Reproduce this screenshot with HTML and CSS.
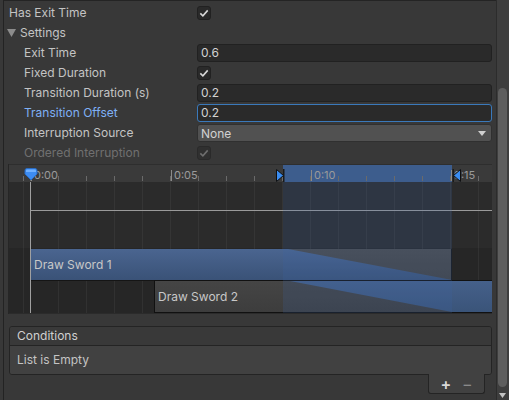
FILE: index.html
```html
<!DOCTYPE html>
<html>
<head>
<meta charset="utf-8">
<link rel="stylesheet" href="styles.css">
</head>
<body>
<div class="window">
  <div class="main">
    <div class="rows">
      <div class="row">
        <span class="label">Has Exit Time</span>
        <span class="check"><svg viewBox="0 0 14 14" width="14" height="14"><path d="M3.3 7.3 L5.9 9.8 L10.7 4.4" fill="none" stroke="#d8d8d8" stroke-width="1.6"/></svg></span>
      </div>
      <div class="row">
        <span class="label foldout"><svg class="fold" viewBox="0 0 9 8" width="9" height="8"><path d="M0 0 H9 L4.5 8 Z" fill="#8c8c8c"/></svg>Settings</span>
      </div>
      <div class="row">
        <span class="label sub">Exit Time</span>
        <span class="field">0.6</span>
      </div>
      <div class="row">
        <span class="label sub">Fixed Duration</span>
        <span class="check"><svg viewBox="0 0 14 14" width="14" height="14"><path d="M3.3 7.3 L5.9 9.8 L10.7 4.4" fill="none" stroke="#d8d8d8" stroke-width="1.6"/></svg></span>
      </div>
      <div class="row">
        <span class="label sub">Transition Duration (s)</span>
        <span class="field">0.2</span>
      </div>
      <div class="row">
        <span class="label sub focus">Transition Offset</span>
        <span class="field focused">0.2</span>
      </div>
      <div class="row">
        <span class="label sub">Interruption Source</span>
        <span class="dropdown">None<svg class="caret" viewBox="0 0 8 5" width="8" height="5"><path d="M0 0 H8 L4 5 Z" fill="#d0d0d0"/></svg></span>
      </div>
      <div class="row">
        <span class="label sub disabled">Ordered Interruption</span>
        <span class="check dim"><svg viewBox="0 0 14 14" width="14" height="14"><path d="M3.3 7.3 L5.9 9.8 L10.7 4.4" fill="none" stroke="#6e6e6e" stroke-width="1.6"/></svg></span>
      </div>
    </div>

    <div class="timeline">
      <div class="ruler">
        <div class="sel-ruler"></div>
        <div class="ticks"></div>
        <span class="mark" style="left:22px">0:00</span>
        <span class="mark" style="left:162px">0:05</span>
        <span class="mark" style="left:302px">0:10</span>
        <span class="mark" style="left:442px">0:15</span>
        <svg class="range-start" viewBox="0 0 9 13" width="9" height="13"><path d="M0.5 0.5 L7.5 6.5 L0.5 12.5 Z" fill="#3a8cf0" stroke="#101010" stroke-width="1"/><rect x="7" y="0" width="1.5" height="13" fill="#1a1a1a"/></svg>
        <svg class="range-end" viewBox="0 0 9 13" width="9" height="13"><path d="M8.5 0.5 L1.5 6.5 L8.5 12.5 Z" fill="#3a8cf0" stroke="#101010" stroke-width="1"/><rect x="0.5" y="0" width="1.5" height="13" fill="#1a1a1a"/></svg>
        <svg class="playhead" viewBox="0 0 14 13" width="14" height="13"><path d="M1 2.5 Q1 0.5 3 0.5 H11 Q13 0.5 13 2.5 V6 L7 12 L1 6 Z" fill="#3d8cf2" stroke="#2a6cc4" stroke-width="1"/><path d="M2 2.5 Q2 1.5 3 1.5 H11 Q12 1.5 12 2.5 V4 H2 Z" fill="#6fb0ff"/></svg>
      </div>
      <div class="tl-body">
        <div class="curve"><div class="hline"></div></div>
        <div class="tracks">
          <div class="bar bar1">
            <div class="fade1"></div>
            <span class="bar-label">Draw Sword 1</span>
          </div>
          <div class="bar bar2">
            <div class="fade2"></div>
            <span class="bar-label">Draw Sword 2</span>
          </div>
        </div>
        <div class="sel-body"></div>
        <div class="playline"></div>
      </div>
    </div>

    <div class="conditions">
      <div class="cond-head">Conditions</div>
      <div class="cond-body">List is Empty</div>
    </div>
    <div class="cond-foot">
      <span class="plus">+</span>
      <span class="minus">−</span>
    </div>
  </div>
  <div class="scrollbar">
    <div class="thumb"></div>
    <svg class="down" viewBox="0 0 7 5" width="7" height="5"><path d="M0 0 H7 L3.5 5 Z" fill="#c4c4c4"/></svg>
  </div>
</div>
</body>
</html>
```

FILE: styles.css
```css
* { box-sizing: border-box; }
html, body {
  margin: 0;
  padding: 0;
  width: 509px;
  height: 400px;
  overflow: hidden;
  background: #383838;
  font-family: Inter, "Noto Sans", sans-serif;
  font-size: 12px;
  color: #c4c4c4;
}
.window {
  display: flex;
  height: 400px;
}
.main {
  flex: 1;
  margin-left: 3px;
  border-left: 1px solid #232323;
  border-top: 1px solid #242424;
  padding-top: 2px;
}
.rows { display: flex; flex-direction: column; }
.row {
  height: 20px;
  display: grid;
  grid-template-columns: 193px 1fr;
  align-items: center;
  padding-right: 4px;
}
.label { padding-left: 5px; white-space: nowrap; line-height: 20px; }
.label.foldout { padding-left: 3px; display: flex; align-items: center; }
.fold { margin-right: 4px; }
.label.sub { padding-left: 20px; }
.label.focus { color: #7fb0f5; }
.label.disabled { color: #707070; }
.check {
  width: 14px;
  height: 14px;
  background: #2a2a2a;
  border: 1px solid #212121;
  border-radius: 3px;
  display: flex;
  align-items: center;
  justify-content: center;
  overflow: hidden;
}
.check svg { flex: none; }
.check.dim { background: #303030; border-color: #2a2a2a; }
.field {
  height: 18px;
  background: #2a2a2a;
  border: 1px solid #212121;
  border-radius: 3px;
  padding-left: 3px;
  line-height: 16px;
  color: #d2d2d2;
}
.field.focused { border-color: #3a79bb; }
.dropdown {
  height: 18px;
  background: #515151;
  border: 1px solid #303030;
  border-radius: 3px;
  padding-left: 3px;
  padding-right: 5px;
  display: flex;
  align-items: center;
  justify-content: space-between;
  color: #d2d2d2;
}

/* timeline */
.timeline {
  margin: 1px 4px 0 4px;
  height: 150px;
  border-left: 1px solid #262626;
  position: relative;
  background: #2b2b2b;
}
.ruler {
  height: 18px;
  background: #3a3a3a;
  border-top: 1px solid #2e2e2e;
  position: relative;
  overflow: hidden;
}
.sel-ruler {
  position: absolute;
  left: 274px;
  width: 169px;
  top: 0;
  bottom: 0;
  background: #3d5d8d;
}
.ticks {
  position: absolute;
  left: 0; right: 0; bottom: 1px;
  height: 5px;
  background: repeating-linear-gradient(to right, #6a6a6a 0 1px, transparent 1px 28px);
  background-position: 21px 0;
}
.mark {
  position: absolute;
  top: 5px;
  height: 11px;
  border-left: 1px solid #8a8a8a;
  padding-left: 2px;
  font-size: 11px;
  line-height: 10px;
  color: #9a9a9a;
}
.playhead { position: absolute; left: 15px; top: 3px; }
.range-start { position: absolute; left: 267px; top: 4px; }
.range-end { position: absolute; left: 443px; top: 4px; }

.tl-body {
  position: relative;
  height: 131px;
  background-color: #2b2b2b;
  background-image: repeating-linear-gradient(to right, #353535 0 1px, transparent 1px 28px);
  background-position: 21px 0;
}
.curve { height: 66px; position: relative; }
.hline {
  position: absolute;
  left: 21px; right: 0;
  top: 28px;
  height: 1px;
  background: #9a9a9a;
}
.tracks {
  height: 65px;
  position: relative;
  background-color: #262626;
  background-image: repeating-linear-gradient(to right, #313131 0 1px, transparent 1px 28px);
  background-position: 21px 0;
}
.bar {
  position: absolute;
  overflow: hidden;
}
.bar-label {
  position: absolute;
  left: 4px;
  top: 0; bottom: 0;
  display: flex;
  align-items: center;
  color: #c8c8c8;
  font-size: 12px;
}
.bar1 {
  left: 21px;
  width: 422px;
  top: 1px;
  height: 32px;
  background: linear-gradient(#4a6590, #3a5277);
  border-bottom: 1px solid #151515;
  border-right: 1px solid #151515;
}
.fade1 {
  position: absolute;
  left: 258px;
  width: 164px;
  top: 0; bottom: 0;
  background: linear-gradient(#4b4b4b, #434343);
  clip-path: polygon(0 0, 100% 0, 100% 100%);
}
.bar2 {
  left: 145px;
  right: 0;
  top: 32px;
  height: 33px;
  background: linear-gradient(#454545, #3d3d3d);
  border: 1px solid #111111;
  border-right: none;
}
.bar2 .bar-label { left: 3px; }
.fade2 {
  position: absolute;
  left: 135px;
  right: 0;
  top: 0; bottom: 0;
  background: linear-gradient(#45608a, #3a5479);
  clip-path: polygon(0 0, 100% 0, 100% 100%, 162px 100%);
}
.sel-body {
  position: absolute;
  left: 274px;
  width: 169px;
  top: 0; bottom: 0;
  background: rgba(62, 100, 165, 0.2);
}
.playline {
  position: absolute;
  left: 21px;
  top: 0; bottom: 0;
  width: 1px;
  background: #a0a0a0;
}

/* conditions */
.conditions {
  margin: 12px 4px 0 5px;
  border: 1px solid #242424;
  border-radius: 3px;
  overflow: hidden;
}
.cond-head {
  height: 19px;
  background: #393939;
  border-bottom: 1px solid #242424;
  padding-left: 7px;
  line-height: 18px;
  color: #d0d0d0;
}
.cond-body {
  height: 28px;
  background: #414141;
  padding-left: 7px;
  line-height: 28px;
  color: #c4c4c4;
}
.cond-foot {
  margin: -1px 11px 0 auto;
  width: 57px;
  height: 20px;
  background: #414141;
  border: 1px solid #242424;
  border-top: none;
  border-radius: 0 0 3px 3px;
  display: flex;
  align-items: center;
  justify-content: space-around;
  padding: 0 6px;
  font-size: 16px;
  line-height: 16px;
}
.plus { color: #d8d8d8; font-weight: 600; }
.minus { color: #8a8a8a; }

/* scrollbar */
.scrollbar {
  width: 13px;
  flex: none;
  background: #3e3e3e;
  border-left: 1px solid #2c2c2c;
  position: relative;
}
.thumb {
  position: absolute;
  left: 1px;
  width: 9px;
  top: 88px;
  height: 299px;
  background: #5e5e5e;
  border-radius: 5px;
}
.down { position: absolute; left: 2px; top: 393px; }
```
